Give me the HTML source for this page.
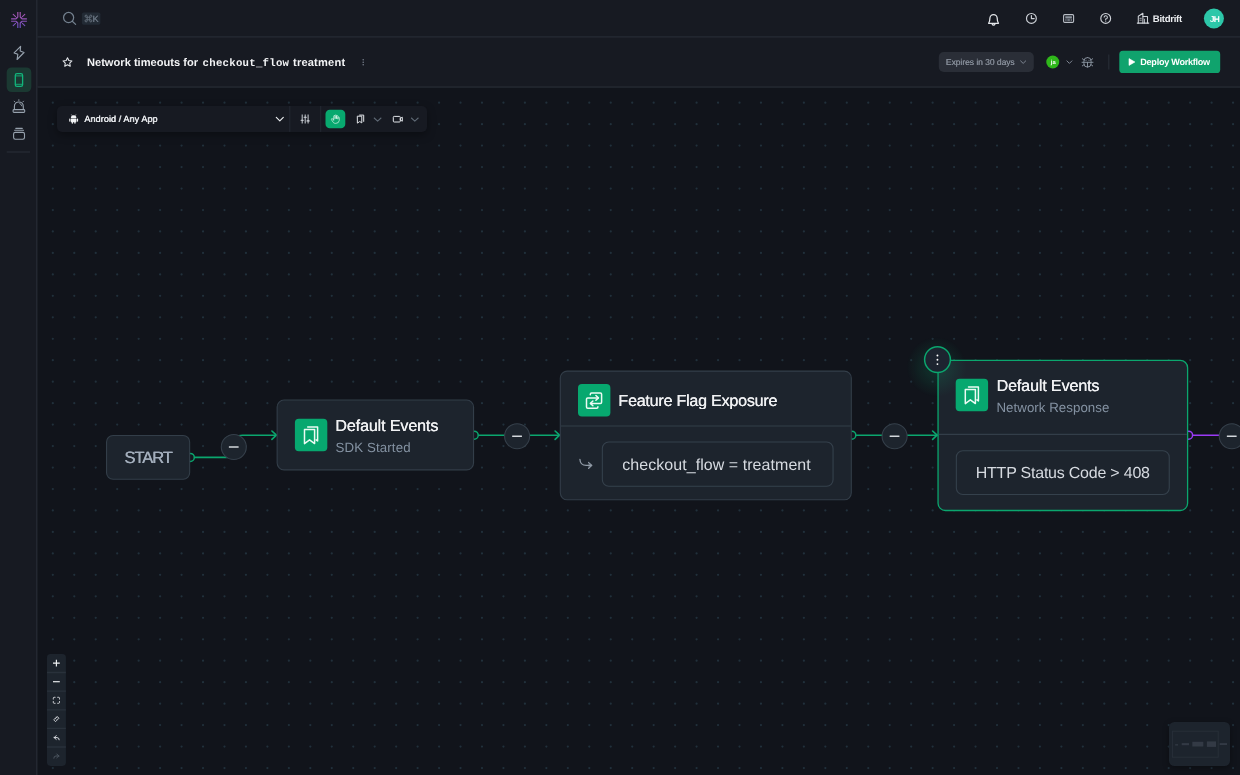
<!DOCTYPE html>
<html lang="en">
<head>
<meta charset="utf-8">
<title>Network timeouts for checkout_flow treatment</title>
<style>
*{box-sizing:border-box;margin:0;padding:0}
html,body{width:1240px;height:775px;overflow:hidden;background:#11141b;font-family:"Liberation Sans",sans-serif;color:#e6e8ec}
.abs{position:absolute}
#app{position:relative;width:1240px;height:775px;overflow:hidden;background:#11141b}
#canvas{position:absolute;left:37px;top:87px;width:1203px;height:688px;background-color:#11141b}
#sidebar{position:absolute;left:0;top:0;width:37px;height:775px;background:#171a22}
#topbar{position:absolute;left:37px;top:0;width:1203px;height:37px;background:#171a22}
#header{position:absolute;left:37px;top:37px;width:1203px;height:50px;background:#171a22}
svg{position:absolute;overflow:visible}
.t{position:absolute;white-space:pre;line-height:1;will-change:transform}
.u{display:inline-block;transform:skewX(0.05deg);transform-origin:0 0}
</style>
</head>
<body>
<div id="app">
<div id="canvas"></div>
<svg class="abs" style="left:0;top:0" width="1240" height="775" viewBox="0 0 1240 775"><path d="M52.81 102.68H1262 M52.81 124.14H1262 M52.81 145.61H1262 M52.81 167.07H1262 M52.81 188.53H1262 M52.81 210.00H1262 M52.81 231.46H1262 M52.81 252.92H1262 M52.81 274.38H1262 M52.81 295.85H1262 M52.81 317.31H1262 M52.81 338.77H1262 M52.81 360.24H1262 M52.81 381.70H1262 M52.81 403.16H1262 M52.81 424.62H1262 M52.81 446.09H1262 M52.81 467.55H1262 M52.81 489.01H1262 M52.81 510.48H1262 M52.81 531.94H1262 M52.81 553.40H1262 M52.81 574.87H1262 M52.81 596.33H1262 M52.81 617.79H1262 M52.81 639.26H1262 M52.81 660.72H1262 M52.81 682.18H1262 M52.81 703.64H1262 M52.81 725.11H1262 M52.81 746.57H1262 M52.81 768.03H1262" fill="none" stroke="#21303b" stroke-width="2.25" stroke-linecap="round" stroke-dasharray="0 21.459"/></svg>

<div id="sidebar"></div>
<div id="topbar"></div>
<div id="header"></div>
<svg class="abs" style="left:0;top:0" width="1240" height="775" viewBox="0 0 1240 775"><g fill="#262b34"><rect x="36.15" y="0" width="1.3" height="775"/><rect x="37.45" y="36.25" width="1203" height="1.3"/><rect x="37.45" y="86.4" width="1203" height="1.3"/></g></svg>
<!-- sidebar icons -->
<svg class="abs" style="left:10.75px;top:12px" width="16" height="16" viewBox="0 0 16 16">
 <defs><linearGradient id="lg" gradientUnits="userSpaceOnUse" x1="0" y1="0" x2="0" y2="16"><stop offset="0" stop-color="#aa58b2"/><stop offset="0.5" stop-color="#9152b6"/><stop offset="1" stop-color="#6a50c6"/></linearGradient></defs>
 <g stroke="url(#lg)" fill="none" stroke-linecap="butt" stroke-linejoin="miter">
  <path d="M6.8 0.1V4.9L5.3 6.4M9.2 0.1V4.9L10.7 6.4" stroke-width="1.15"/>
  <path d="M6.8 15.9V11.1L5.3 9.6M9.2 15.9V11.1L10.7 9.6" stroke-width="1.15"/>
  <path d="M0.1 6.8H4.9L6.4 5.3M0.1 9.2H4.9L6.4 10.7" stroke-width="1.15"/>
  <path d="M15.9 6.8H11.1L9.6 5.3M15.9 9.2H11.1L9.6 10.7" stroke-width="1.15"/>
  <path d="M2.2 2.4L4.6 4.7M13.8 2.4L11.4 4.7M2.2 13.6L4.6 11.3M13.8 13.6L11.4 11.3" stroke-width="1.05" stroke-linecap="round"/>
 </g>
</svg>
<svg class="abs" style="left:0;top:0" width="37" height="160" viewBox="0 0 37 160">
 <path d="M20.6 46.3L14.1 52.9L17.8 54.3L17.1 59.5L24 52.5L20.2 51Z" fill="none" stroke="#96a1ad" stroke-width="1.15" stroke-linejoin="round"/>
 <rect x="6.7" y="67.4" width="24.6" height="24.7" rx="5" fill="#1b3932"/>
 <rect x="15.3" y="73.7" width="7.3" height="12.7" rx="1.7" fill="none" stroke="#12b57b" stroke-width="1.3"/>
 <path d="M15.3 75.9H22.6M15.3 84.3H22.6" stroke="#12b57b" stroke-width="0.9"/>
 <g fill="none" stroke="#96a1ad" stroke-width="1.1" stroke-linecap="round" stroke-linejoin="round">
  <path d="M14.4 109.4V106.4A4.45 4.45 0 0 1 23.3 106.4V109.4"/>
  <rect x="13.1" y="109.6" width="11.6" height="2.8" rx="0.9"/>
  <path d="M18.85 99.7V100.5M14.2 101.2L14.8 101.9M23.5 101.2L22.9 101.9" stroke-width="0.9"/>
  <path d="M19.8 103.6A3 3 0 0 1 21.9 105.9" stroke-width="0.9"/>
 </g>
 <g fill="none" stroke="#96a1ad" stroke-width="1.1" stroke-linecap="round">
  <path d="M15.8 128.4H22.3M14.6 130.2H23.5" stroke-width="1.05"/>
  <rect x="13.6" y="132.4" width="10.9" height="6.8" rx="1.7"/>
 </g>
 <rect x="6.7" y="151.5" width="23.3" height="1" fill="#2a2f38"/>
</svg>
<!-- topbar -->
<svg class="abs" style="left:0;top:0" width="1240" height="37" viewBox="0 0 1240 37">
 <g fill="none" stroke="#73808e" stroke-width="1.25" stroke-linecap="round">
  <circle cx="68.6" cy="17.55" r="5.05"/><path d="M72.3 21.3L75.6 24.4"/>
 </g>
 <rect x="81.9" y="12.5" width="18.5" height="12.2" rx="1.8" fill="#222a34"/>
 <path d="M87.2 17.25H89.7V19.75H87.2ZM87.2 17.25H86.12A1.08 1.08 0 1 1 87.2 16.17ZM89.7 17.25V16.17A1.08 1.08 0 1 1 90.78 17.25ZM89.7 19.75H90.78A1.08 1.08 0 1 1 89.7 20.83ZM87.2 19.75V20.83A1.08 1.08 0 1 1 86.12 19.75Z" fill="none" stroke="#6a7582" stroke-width="0.85" stroke-linejoin="round"/>
 <g fill="none" stroke="#e4e7eb" stroke-width="1.25" stroke-linejoin="round" stroke-linecap="round">
  <path d="M988.6 23.3C989.7 21.9 989.9 20.5 989.9 18.3A3.65 3.65 0 0 1 997.2 18.3C997.2 20.5 997.4 21.9 998.5 23.3Z"/>
  <path d="M992.2 24.2A1.5 1.5 0 0 0 994.9 24.2"/>
 </g>
 <g fill="none" stroke="#cfd3d9" stroke-width="1.15" stroke-linecap="round" stroke-linejoin="round">
  <circle cx="1031.4" cy="18.4" r="4.9"/><path d="M1031.4 15.6V18.6H1034.2"/>
 </g>
 <rect x="1063.6" y="14.6" width="10" height="7.8" rx="1.1" fill="none" stroke="#b9bec6" stroke-width="1.1"/>
 <path d="M1065.3 16.3H1071.9V18.6H1065.3ZM1065.3 19.3H1066.6V20.7H1065.3ZM1067.3 19.3H1069.9V20.7H1067.3ZM1070.6 19.3H1071.9V20.7H1070.6Z" fill="#8b929c"/>
 <g fill="none" stroke="#cfd3d9" stroke-width="1.15" stroke-linecap="round">
  <circle cx="1105.7" cy="18.4" r="4.9"/>
  <path d="M1104.1 17.1A1.65 1.65 0 1 1 1105.7 19V19.6" stroke-width="1.05"/>
 </g>
 <circle cx="1105.7" cy="21.1" r="0.65" fill="#cfd3d9"/>
 <g fill="none" stroke="#cfd3d9" stroke-width="1.05" stroke-linejoin="round" stroke-linecap="round">
  <path d="M1137.3 23.1H1148.8"/>
  <path d="M1138.3 23.1V16.2L1142.9 13.2V23.1"/>
  <path d="M1142.9 16.4H1147.5V23.1"/>
  <path d="M1139.9 18.3H1141.3M1139.9 20.2H1141.3M1144.5 19.2V23.1" stroke-width="0.8"/>
 </g>
 <circle cx="1213.9" cy="18.5" r="10" fill="#2dc7a9"/>
</svg>
<div class="t" style="left:92px;top:14px;font-size:9.0px;letter-spacing:-0.43px;color:#6a7582;text-shadow:0.26px 0 0 #6a7582;"><span class="u" style="transform:translate(0.51px,0.7px) skewX(.05deg)">K</span></div>
<div class="t" style="left:1152px;top:13px;font-size:9.6px;letter-spacing:-0.303px;color:#eceef1;font-weight:bold;"><span class="u" style="transform:translate(0.83px,0.7px) skewX(.05deg)">Bitdrift</span></div>
<div class="t" style="left:1209px;top:15px;font-size:8.2px;letter-spacing:-0.284px;color:#ffffff;text-shadow:0.26px 0 0 #ffffff;"><span class="u" style="transform:translate(0.89px,0.7px) skewX(.05deg)">JH</span></div>
<!-- header -->
<svg class="abs" style="left:0;top:37px" width="1240" height="50" viewBox="0 37 1240 50">
 <path d="M67.5 57.7L68.85 60.55L71.95 60.95L69.7 63.1L70.25 66.2L67.5 64.7L64.75 66.2L65.3 63.1L63.05 60.95L66.15 60.55Z" fill="none" stroke="#e4e7eb" stroke-width="1.05" stroke-linejoin="round"/>
 <g fill="#7c8591"><circle cx="363.2" cy="59.8" r="0.75"/><circle cx="363.2" cy="62.3" r="0.75"/><circle cx="363.2" cy="64.8" r="0.75"/></g>
 <rect x="938.8" y="52" width="95" height="20" rx="5" fill="#2a2e37"/>
 <path d="M1020.6 60.9L1023.15 63.4L1025.7 60.9" fill="none" stroke="#7d8591" stroke-width="1" stroke-linecap="round" stroke-linejoin="round"/>
 <circle cx="1052.75" cy="62" r="6.5" fill="#2fb71a"/>
 <path d="M1066.9 60.9L1069.4 63.4L1071.9 60.9" fill="none" stroke="#7d8591" stroke-width="1" stroke-linecap="round" stroke-linejoin="round"/>
 <g fill="none" stroke="#8a94a0" stroke-width="0.95" stroke-linecap="round">
  <rect x="1083.9" y="57.5" width="7.2" height="9.6" rx="3.6"/>
  <path d="M1082 62.3H1093M1087.5 62.3V67.1M1082.3 58.7L1084 60.1M1092.7 58.7L1091 60.1M1082.3 65.9L1084 64.6M1092.7 65.9L1091 64.6"/>
 </g>
 <circle cx="1086" cy="60.2" r="0.55" fill="#8a94a0"/><circle cx="1089" cy="60.2" r="0.55" fill="#8a94a0"/>
 <rect x="1108.3" y="54.5" width="1" height="15" fill="#2a2f38"/>
 <rect x="1119.3" y="50.8" width="100.9" height="22.2" rx="3.6" fill="#10a36d"/>
 <path d="M1129 58.6L1134.9 62L1129 65.4Z" fill="#ffffff" stroke="#ffffff" stroke-width="0.6" stroke-linejoin="round"/>
</svg>
<div class="t" style="left:86px;top:56px;font-size:11.1px;letter-spacing:0.015px;color:#f2f3f5;font-weight:bold;"><span class="u" style="transform:translate(0.93px,0.8px) skewX(.05deg)">Network timeouts for</span></div>
<div class="t" style="left:202px;top:57px;font-size:10.7px;letter-spacing:0.257px;color:#f2f3f5;font-weight:bold;font-family:'Liberation Mono',monospace;"><span class="u" style="transform:translate(0.57px,0.7px) skewX(.05deg)">checkout_flow</span></div>
<div class="t" style="left:292px;top:56px;font-size:11.1px;letter-spacing:0.19px;color:#f2f3f5;font-weight:bold;"><span class="u" style="transform:translate(1.0px,0.8px) skewX(.05deg)">treatment</span></div>
<div class="t" style="left:945px;top:57px;font-size:8.6px;letter-spacing:-0.078px;color:#858c97;text-shadow:0.20px 0 0 #858c97;"><span class="u" style="transform:translate(0.77px,0.9px) skewX(.05deg)">Expires in 30 days</span></div>
<div class="t" style="left:1050px;top:59px;font-size:5.8px;letter-spacing:0.012px;color:#ffffff;font-weight:bold;"><span class="u" style="transform:translate(0.82px,0.9px) skewX(.05deg)">ja</span></div>
<div class="t" style="left:1140px;top:58px;font-size:9.1px;letter-spacing:-0.27px;color:#ffffff;font-weight:bold;"><span class="u" style="transform:translate(0.27px,0.1px) skewX(.05deg)">Deploy Workflow</span></div>
<!-- toolbar -->
<div class="abs" style="left:56.5px;top:106px;width:370.6px;height:25.9px;border-radius:5px;background:#171a22;box-shadow:0 3px 8px rgba(0,0,0,.35)"></div>
<svg class="abs" style="left:0;top:100px" width="440" height="40" viewBox="0 100 440 40">
 <rect x="289.3" y="106" width="1" height="25.9" fill="#242932"/>
 <rect x="320.2" y="106" width="1" height="25.9" fill="#242932"/>
 <g fill="#f2f3f5">
  <path d="M70.9 117.9A2.75 2.75 0 0 1 76.4 117.9Z"/>
  <rect x="70.9" y="118.4" width="5.5" height="3.9" rx="0.5"/>
  <rect x="69.2" y="118.4" width="1.25" height="3.3" rx="0.6"/>
  <rect x="76.85" y="118.4" width="1.25" height="3.3" rx="0.6"/>
  <rect x="71.7" y="121.6" width="1.3" height="2.1" rx="0.6"/>
  <rect x="74.3" y="121.6" width="1.3" height="2.1" rx="0.6"/>
 </g>
 <path d="M71.5 114.7L72.2 115.7M75.8 114.7L75.1 115.7" stroke="#f2f3f5" stroke-width="0.5" stroke-linecap="round"/>
 <path d="M276.3 117.4L279.8 120.8L283.3 117.4" fill="none" stroke="#eceef1" stroke-width="1.15" stroke-linecap="round" stroke-linejoin="round"/>
 <g stroke="#d5d9df" stroke-width="0.95" stroke-linecap="round" fill="none">
  <path d="M302.2 114.9V123.1M305.2 114.9V123.1M308.1 114.9V123.1"/>
  <path d="M301.1 120.2H303.3M304.1 117.3H306.3M307 120.9H309.2" stroke-width="1.1"/>
 </g>
 <rect x="325.5" y="109.7" width="19.8" height="18.5" rx="4.3" fill="#08a96f"/>
 <g fill="none" stroke="#e9fbf3" stroke-opacity=".85" stroke-width="0.75" stroke-linecap="round" stroke-linejoin="round">
  <path d="M333.7 119V116.2A0.7 0.7 0 0 1 335.1 116.2V118.4M335.1 118.4V115.6A0.7 0.7 0 0 1 336.5 115.6V118.4M336.5 118.4V116.3A0.7 0.7 0 0 1 337.9 116.3V118.8M337.9 118.8V117.7A0.7 0.7 0 0 1 339.3 117.7V120.3A3.6 3.6 0 0 1 335.7 123.4C334.2 123.4 333.3 122.7 332.4 121.2L331.4 119.5A0.7 0.7 0 0 1 332.6 118.8L333.7 120.4V119"/>
 </g>
 <g fill="none" stroke="#e4e7eb" stroke-width="1" stroke-linejoin="round" stroke-linecap="round">
  <path d="M357.7 116.2H361.8V122.9L359.75 121.5L357.7 122.9Z"/>
  <path d="M359.6 115.1H363.7V121.4"/>
 </g>
 <path d="M374.2 118L377.6 121.2L381 118" fill="none" stroke="#5f6974" stroke-width="1.05" stroke-linecap="round" stroke-linejoin="round"/>
 <g fill="none" stroke="#e4e7eb" stroke-width="1" stroke-linejoin="round">
  <rect x="393.3" y="116.4" width="7" height="5.6" rx="0.9"/>
  <path d="M400.3 118.4L402.3 117.2V121.2L400.3 120Z"/>
 </g>
 <path d="M411.4 118L414.8 121.2L418.2 118" fill="none" stroke="#5f6974" stroke-width="1.05" stroke-linecap="round" stroke-linejoin="round"/>
</svg>
<div class="t" style="left:84px;top:115px;font-size:9.1px;letter-spacing:0.057px;color:#eceef1;text-shadow:0.39px 0 0 #eceef1;"><span class="u" style="transform:translate(0.21px,0.2px) skewX(.05deg)">Android / Any App</span></div>
<!-- edges + nodes -->
<svg class="abs" style="left:0;top:0" width="1240" height="775" viewBox="0 0 1240 775">
 <g fill="none" stroke="#0ba66e" stroke-width="1.65">
  <path d="M194 457.4H226.4Q234.4 457.4 234.4 449.4V443.2Q234.4 435.2 242.4 435.2H276"/>
  <path d="M478 435.2H559.4"/>
  <path d="M856 435.2H937"/>
 </g>
 <path d="M1192.5 435.2H1240" fill="none" stroke="#9b3af6" stroke-width="1.65"/>
 <circle cx="190.3" cy="457.4" r="4.0" fill="#141820" stroke="#0ba66e" stroke-width="1.5"/><circle cx="474.2" cy="435.2" r="4.0" fill="#141820" stroke="#0ba66e" stroke-width="1.5"/><circle cx="851.8" cy="435.2" r="4.0" fill="#141820" stroke="#0ba66e" stroke-width="1.5"/><circle cx="1188.6" cy="435.2" r="4.0" fill="#141820" stroke="#9b3af6" stroke-width="1.5"/>
 <path d="M271.9 431.0L276.4 435.2L271.9 439.4" fill="none" stroke="#0ba66e" stroke-width="1.65" stroke-linecap="round" stroke-linejoin="round"/><path d="M555.1 431.0L559.6 435.2L555.1 439.4" fill="none" stroke="#0ba66e" stroke-width="1.65" stroke-linecap="round" stroke-linejoin="round"/><path d="M932.6 431.0L937.1 435.2L932.6 439.4" fill="none" stroke="#0ba66e" stroke-width="1.65" stroke-linecap="round" stroke-linejoin="round"/>
 <!-- START -->
 <rect x="106.55" y="435.45" width="83.10" height="43.80" rx="6.45" fill="#1d242d" stroke="#333e49" stroke-width="1.1"/>
 <!-- node 1 -->
 <rect x="277.15" y="400.05" width="196.40" height="69.80" rx="6.95" fill="#1d242d" stroke="#333e49" stroke-width="1.1"/>
 <g transform="translate(294.9 418.8)"><rect width="32.4" height="32.4" rx="4" fill="#07a86f"/><g fill="none" stroke="#ecfaf3" stroke-width="1.5" stroke-linejoin="round" stroke-linecap="round"><path d="M9.6 10.8H19.7V24.8L14.65 21L9.6 24.8Z"/><path d="M12.8 8.1H22.7V22.2L21.2 21.1"/></g></g>
 <!-- node 2 -->
 <rect x="560.30" y="371.10" width="291.00" height="128.70" rx="6.95" fill="#1d242d" stroke="#333e49" stroke-width="1.1"/>
 <path d="M560.8 426.0H850.8" stroke="#333e49" stroke-width="1.1" fill="none"/>
 <g transform="translate(578.0 384.1)"><rect width="32.4" height="32.4" rx="4" fill="#07a86f"/><g fill="none" stroke="#ecfaf3" stroke-width="1.5" stroke-linejoin="round" stroke-linecap="round"><path d="M12.3 10.6V10.2Q12.3 9 13.5 9H22.4Q23.6 9 23.6 10.2V18.1Q23.6 19.3 22.4 19.3H12.6"/><path d="M14.9 16.9L12.4 19.3L14.9 21.7"/><path d="M19.9 22.6V22.9Q19.9 24.1 18.7 24.1H9.7Q8.5 24.1 8.5 22.9V15Q8.5 13.8 9.7 13.8H20.2"/><path d="M17.9 11.4L20.4 13.8L17.9 16.2"/></g></g>
 <rect x="602.35" y="442.05" width="230.70" height="44.20" rx="6.45" fill="none" stroke="#35414c" stroke-width="1.1"/>
 <path d="M579.9 459.3Q580.2 465.4 586.2 465.4H591.2" fill="none" stroke="#909aa6" stroke-width="1.25" stroke-linecap="round"/><path d="M588.5 462.4L591.9 465.4L588.5 468.5" fill="#909aa6" fill-opacity=".55" stroke="#909aa6" stroke-width="1.1" stroke-linecap="round" stroke-linejoin="round"/>
 <!-- node 3 -->
 <rect x="938.05" y="360.30" width="249.55" height="150.20" rx="7.35" fill="#1d242d" stroke="#0ba66e" stroke-width="1.3"/>
 <path d="M938.8 434.4H1186.9" stroke="#333e49" stroke-width="1.1" fill="none"/>
 <g transform="translate(955.7 378.8)"><rect width="32.4" height="32.4" rx="4" fill="#07a86f"/><g fill="none" stroke="#ecfaf3" stroke-width="1.5" stroke-linejoin="round" stroke-linecap="round"><path d="M9.6 10.8H19.7V24.8L14.65 21L9.6 24.8Z"/><path d="M12.8 8.1H22.7V22.2L21.2 21.1"/></g></g>
 <rect x="956.35" y="450.75" width="212.90" height="43.70" rx="6.45" fill="none" stroke="#35414c" stroke-width="1.1"/>
 <defs><radialGradient id="glow" cx="0.5" cy="0.5" r="0.5"><stop offset="0" stop-color="#0ea56e" stop-opacity="0.23"/><stop offset="0.45" stop-color="#0ea56e" stop-opacity="0.13"/><stop offset="1" stop-color="#0ea56e" stop-opacity="0"/></radialGradient></defs>
 <circle cx="936.5" cy="367" r="30" fill="url(#glow)"/>
 <circle cx="937.5" cy="359.6" r="12.9" fill="#1d2430" stroke="#0ba66e" stroke-width="1.5"/>
 <g fill="#ffffff"><circle cx="937.45" cy="355.5" r="0.95"/><circle cx="937.45" cy="359.8" r="0.95"/><circle cx="937.45" cy="364.1" r="0.95"/></g>
 <circle cx="233.8" cy="447.0" r="12.5" fill="#1d242d" stroke="#36404b" stroke-width="1.1"/><rect x="228.85" y="446.30" width="9.8" height="1.4" rx="0.3" fill="#d3d7dc"/><circle cx="517.1" cy="436.25" r="12.5" fill="#1d242d" stroke="#36404b" stroke-width="1.1"/><rect x="512.15" y="435.55" width="9.8" height="1.4" rx="0.3" fill="#d3d7dc"/><circle cx="894.6" cy="436.25" r="12.5" fill="#1d242d" stroke="#36404b" stroke-width="1.1"/><rect x="889.65" y="435.55" width="9.8" height="1.4" rx="0.3" fill="#d3d7dc"/><circle cx="1231.8" cy="436.25" r="12.5" fill="#1d242d" stroke="#36404b" stroke-width="1.1"/><rect x="1226.85" y="435.55" width="9.8" height="1.4" rx="0.3" fill="#d3d7dc"/>
</svg>
<div class="t" style="left:124px;top:449px;font-size:16.5px;letter-spacing:-1.029px;color:#a3aebc;text-shadow:0.39px 0 0 #a3aebc;"><span class="u" style="transform:translate(0.29px,0.3px) skewX(.05deg)">START</span></div>
<div class="t" style="left:335px;top:416px;font-size:16.1px;letter-spacing:-0.137px;color:#f0f1f3;text-shadow:0.26px 0 0 #f0f1f3;"><span class="u" style="transform:translate(0.3px,0.9px) skewX(.05deg)">Default Events</span></div>
<div class="t" style="left:335px;top:440px;font-size:13.3px;letter-spacing:0.125px;color:#8492a2;"><span class="u" style="transform:translate(0.4px,0.7px) skewX(.05deg)">SDK Started</span></div>
<div class="t" style="left:618px;top:392px;font-size:16.1px;letter-spacing:-0.235px;color:#f0f1f3;text-shadow:0.26px 0 0 #f0f1f3;"><span class="u" style="transform:translate(0.3px,0.0px) skewX(.05deg)">Feature Flag Exposure</span></div>
<div class="t" style="left:622px;top:456px;font-size:16.0px;letter-spacing:0.054px;color:#d6dae0;"><span class="u" style="transform:translate(0.24px,0.8px) skewX(.05deg)">checkout_flow = treatment</span></div>
<div class="t" style="left:996px;top:376px;font-size:16.1px;letter-spacing:-0.129px;color:#f0f1f3;text-shadow:0.26px 0 0 #f0f1f3;"><span class="u" style="transform:translate(0.4px,0.9px) skewX(.05deg)">Default Events</span></div>
<div class="t" style="left:996px;top:401px;font-size:13.3px;letter-spacing:0.043px;color:#8492a2;"><span class="u" style="transform:translate(0.4px,0.0px) skewX(.05deg)">Network Response</span></div>
<div class="t" style="left:975px;top:465px;font-size:16.0px;letter-spacing:-0.222px;color:#d6dae0;"><span class="u" style="transform:translate(0.7px,0.4px) skewX(.05deg)">HTTP Status Code &gt; 408</span></div>
<!-- zoom controls -->
<svg class="abs" style="left:47px;top:654px" width="18.6" height="111.6" viewBox="47 654 18.6 111.6">
 <rect x="47" y="654.1" width="18.9" height="111.8" rx="3.6" fill="#1d242d"/>
 <path d="M47 672.5H65.9M47 691.15H65.9M47 709.8H65.9M47 728.4H65.9M47 747H65.9" stroke="#29313b" stroke-width="1.3" fill="none"/>
 <g fill="none" stroke="#f0f2f4" stroke-width="1.15" stroke-linecap="butt">
  <path d="M53 663.1H59.8M56.4 659.7V666.5"/>
  <path d="M53 681.7H59.8"/>
 </g>
 <g fill="none" stroke="#e4e7eb" stroke-width="0.9" stroke-linecap="round" stroke-linejoin="round">
  <path d="M53.3 699.1V698.2Q53.3 697.3 54.2 697.3H55.1M57.7 697.3H58.6Q59.5 697.3 59.5 698.2V699.1M59.5 701.5V702.4Q59.5 703.3 58.6 703.3H57.7M55.1 703.3H54.2Q53.3 703.3 53.3 702.4V701.5"/>
  <path d="M54 719.6L57.2 716.4L59 718.2L55.8 721.4ZM55.2 718.4L56 719.2M56.4 717.2L57.2 718" stroke-width="0.8"/>
 </g>
 <path d="M54.2 737.6L56.2 735.6M54.2 737.6L56.2 739.4M54.2 737.6H57Q59.2 737.6 59.2 739.8" fill="none" stroke="#dfe3e8" stroke-width="0.95" stroke-linecap="round" stroke-linejoin="round"/>
 <path d="M58.8 756L56.8 754M58.8 756L56.8 757.8M58.8 756H56Q53.8 756 53.8 758.2" fill="none" stroke="#4d5661" stroke-width="0.95" stroke-linecap="round" stroke-linejoin="round"/>
</svg>
<!-- minimap -->
<div class="abs" style="left:1168.9px;top:722.3px;width:61.4px;height:43.3px;border-radius:5.5px;background:#1d242d;box-shadow:0 2px 6px rgba(0,0,0,.35)"></div>
<svg class="abs" style="left:1168px;top:722px" width="64" height="44" viewBox="1168 722 64 44">
 <rect x="1172.4" y="731.2" width="45.8" height="26" fill="none" stroke="#28303a" stroke-width="0.9"/>
 <g fill="#333a45">
  <rect x="1175.2" y="744.2" width="2.8" height="1.3"/>
  <rect x="1181.7" y="743.1" width="7.3" height="2.1"/>
  <rect x="1192.3" y="741.8" width="11" height="4.7"/>
  <rect x="1206.9" y="741.4" width="9.1" height="5.5"/>
  <rect x="1219.7" y="743.1" width="7.3" height="1.9"/>
 </g>
</svg>
</div>
</body>
</html>
